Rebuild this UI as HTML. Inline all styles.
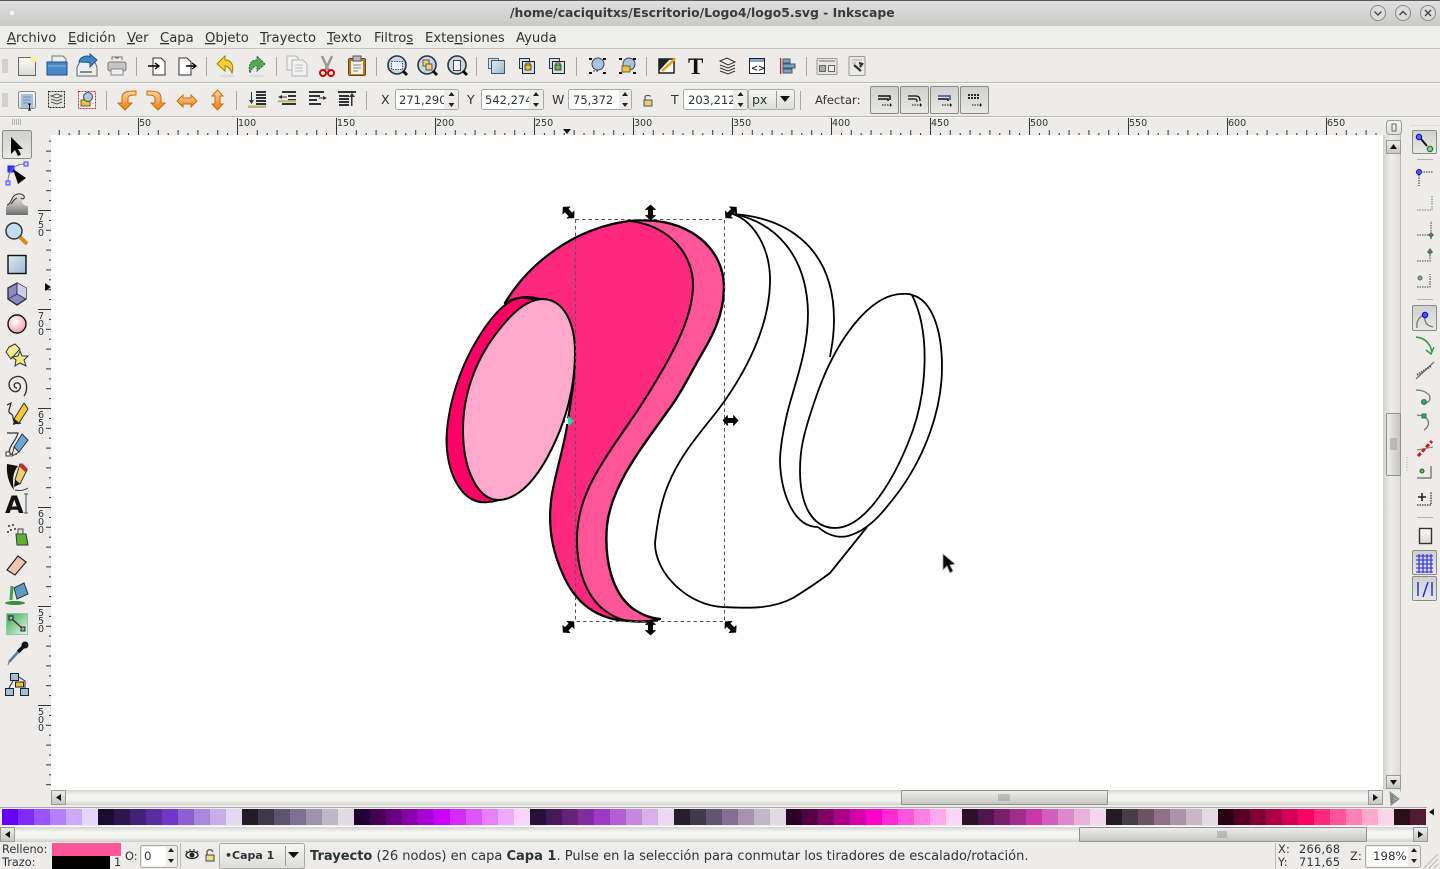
<!DOCTYPE html>
<html><head><meta charset="utf-8"><title>Inkscape</title>
<style>
html,body{margin:0;padding:0;background:#edeceb;width:1440px;height:869px;overflow:hidden}
svg{position:absolute;left:0;top:0}
text{font-family:"DejaVu Sans","Liberation Sans",sans-serif;fill:#2e3436}
#pal{position:absolute;left:2px;top:809px;height:16px;display:flex;width:1424px}
#pal i{display:block;width:16px;height:16px;flex:none}
</style></head><body>
<svg width="1440" height="869" viewBox="0 0 1440 869" xmlns="http://www.w3.org/2000/svg">
<defs>
<linearGradient id="tb" x1="0" y1="0" x2="0" y2="1"><stop offset="0" stop-color="#e0e0e0"/><stop offset="1" stop-color="#c9c9c9"/></linearGradient>
<linearGradient id="btn" x1="0" y1="0" x2="0" y2="1"><stop offset="0" stop-color="#f6f6f4"/><stop offset="1" stop-color="#dcdcd9"/></linearGradient>
<linearGradient id="tog" x1="0" y1="0" x2="0" y2="1"><stop offset="0" stop-color="#d0d0ce"/><stop offset="1" stop-color="#e8e8e6"/></linearGradient>
<linearGradient id="th" x1="0" y1="0" x2="0" y2="1"><stop offset="0" stop-color="#d4d4d2"/><stop offset=".3" stop-color="#f3f3f1"/><stop offset=".7" stop-color="#f3f3f1"/><stop offset="1" stop-color="#cfcfcd"/></linearGradient>
<linearGradient id="tv" x1="0" y1="0" x2="1" y2="0"><stop offset="0" stop-color="#d2d2d0"/><stop offset=".45" stop-color="#ececea"/><stop offset="1" stop-color="#dededc"/></linearGradient>
<linearGradient id="thumbh" x1="0" y1="0" x2="0" y2="1"><stop offset="0" stop-color="#eeeeec"/><stop offset="1" stop-color="#c4c4c1"/></linearGradient>
<linearGradient id="thumbv" x1="0" y1="0" x2="1" y2="0"><stop offset="0" stop-color="#eeeeec"/><stop offset="1" stop-color="#c4c4c1"/></linearGradient>
<linearGradient id="org" x1="0" y1="0" x2="0" y2="1"><stop offset="0" stop-color="#fcd9a8"/><stop offset="1" stop-color="#f07b10"/></linearGradient>
<linearGradient id="blu" x1="0" y1="0" x2="1" y2="1"><stop offset="0" stop-color="#dfe9f2"/><stop offset="1" stop-color="#9ab8d2"/></linearGradient>
<linearGradient id="pap" x1="0" y1="0" x2="0" y2="1"><stop offset="0" stop-color="#fbfbf9"/><stop offset="1" stop-color="#d8d8d4"/></linearGradient>
<linearGradient id="grn" x1="0" y1="0" x2="1" y2="1"><stop offset="0" stop-color="#2fa84f"/><stop offset="1" stop-color="#f0f8f0"/></linearGradient>
<linearGradient id="wav" x1="0" y1="0" x2="0" y2="1"><stop offset="0" stop-color="#eeeeee"/><stop offset=".5" stop-color="#b8b8b8"/><stop offset="1" stop-color="#707070"/></linearGradient>
<radialGradient id="pk" cx=".4" cy=".35" r=".7"><stop offset="0" stop-color="#fff"/><stop offset="1" stop-color="#ff9aa6"/></radialGradient>
<pattern id="rt" patternUnits="userSpaceOnUse" x="138" y="117" width="19.8" height="18"><rect x="0" y="13" width="1" height="5" fill="#333"/><rect x="9.9" y="16" width="1" height="2" fill="#333"/></pattern>
<pattern id="rl" patternUnits="userSpaceOnUse" x="33" y="210" width="18" height="19.8"><rect x="13" y="0" width="5" height="1" fill="#333"/><rect x="16" y="9.9" width="2" height="1" fill="#333"/></pattern>
<g id="grip"><path d="M2 0H8M2 2H8M2 4H8M2 6H8M2 8H8M2 10H8M2 12H8" stroke="#b4b4b0" stroke-width="1"/></g>
<g id="sp"><path d="M0 -4L3 -8L6 -4Z" fill="#222"/><path d="M0 3L3 7L6 3Z" fill="#222"/></g>
<path id="ha" d="M-7.500 0L-3 -5V-2.200H3V-5L7.500 0L3 5V2.200H-3V5Z" fill="#000" stroke="#000" stroke-width=".7" stroke-linejoin="round"/>
<g id="zm"><circle r="9" fill="#c8d8e8" stroke="#2e3436" stroke-width="1.600"/><path d="M6 6L10 10" stroke="#111" stroke-width="3"/></g>
</defs>

<!-- title bar -->
<rect width="1440" height="26" fill="url(#tb)"/>
<rect width="1440" height="1" fill="#5a5a5a"/>
<circle cx="12" cy="13" r="3" fill="#f4f4f4" stroke="#ccc"/>
<text x="510" y="17" font-size="12.400" font-weight="bold" style="fill:#3a3a3a">/home/caciquitxs/Escritorio/Logo4/logo5.svg - Inkscape</text>
<g fill="#dcdcdc" stroke="#8a8a8a"><circle cx="1378" cy="13" r="7.500"/><circle cx="1403" cy="13" r="7.500"/><circle cx="1428" cy="13" r="7.500"/></g>
<g fill="none" stroke="#444" stroke-width="1.400"><path d="M1374.500 11.500L1378 15L1381.500 11.500"/><path d="M1399.500 15L1403 11.500L1406.500 15"/><path d="M1425 10L1431 16M1431 10L1425 16"/></g>

<!-- menubar -->
<rect y="26" width="1440" height="22" fill="#edede9"/>
<rect y="48" width="1440" height="1" fill="#c2c2be"/>
<g font-size="13.200">
<text x="7" y="42"><tspan style="text-decoration:underline">A</tspan>rchivo</text>
<text x="68" y="42"><tspan style="text-decoration:underline">E</tspan>dición</text>
<text x="127" y="42"><tspan style="text-decoration:underline">V</tspan>er</text>
<text x="160" y="42"><tspan style="text-decoration:underline">C</tspan>apa</text>
<text x="205" y="42"><tspan style="text-decoration:underline">O</tspan>bjeto</text>
<text x="260" y="42"><tspan style="text-decoration:underline">T</tspan>rayecto</text>
<text x="327" y="42"><tspan style="text-decoration:underline">T</tspan>exto</text>
<text x="374" y="42">Filtro<tspan style="text-decoration:underline">s</tspan></text>
<text x="425" y="42">Exte<tspan style="text-decoration:underline">n</tspan>siones</text>
<text x="516" y="42">Ayuda</text>
</g>

<!-- toolbar lines -->
<rect y="82" width="1440" height="1" fill="#b8b8b4"/><rect y="83" width="1440" height="1" fill="#f8f8f6"/>
<rect y="116" width="1440" height="1" fill="#b8b8b4"/><rect y="117" width="1440" height="1" fill="#f8f8f6"/>
<use href="#grip" x="0" y="60"/><use href="#grip" x="0" y="94"/>
<path d="M12.500 119V125M14.500 119V125M16.500 119V125M18.500 119V125M20.500 119V125" stroke="#b4b4b0"/>
<g fill="#a9a9a6">
<rect x="136" y="57" width="1" height="19"/><rect x="206" y="57" width="1" height="19"/><rect x="276" y="57" width="1" height="19"/><rect x="376" y="57" width="1" height="19"/><rect x="476" y="57" width="1" height="19"/><rect x="576" y="57" width="1" height="19"/><rect x="646" y="57" width="1" height="19"/><rect x="806" y="57" width="1" height="19"/>
<rect x="106" y="91" width="1" height="19"/><rect x="236" y="91" width="1" height="19"/><rect x="366" y="91" width="1" height="19"/><rect x="800" y="91" width="1" height="19"/>
</g>

<!-- toolbar 1 icons -->
<rect x="18.500" y="57.500" width="17" height="18" fill="url(#pap)" stroke="#666"/><circle cx="34" cy="59" r="3" fill="#ffee99" stroke="#eeeeaa"/>
<path d="M52 62V56H63L66 59V64" fill="#eee" stroke="#777"/><path d="M47 62H67V75H47Z" fill="#4a86c8" stroke="#234f85"/><path d="M48 66H66" stroke="#8ab6e0"/>
<path d="M77 67L82 58H93L97 67V76H77Z" fill="#eee" stroke="#666"/><path d="M79 62C80 56 88 55 90 57V54L97 60L90 67V63C87 62 83 62 79 62Z" fill="#3f86c6" stroke="#1f5a92"/><path d="M80 72H92" stroke="#888" stroke-width="2"/>
<path d="M112 60V57H122V60" fill="#eee" stroke="#777"/><rect x="108" y="62" width="18" height="9" rx="2" fill="#c4c4c2" stroke="#777"/><rect x="111" y="69" width="12" height="6" fill="#eee" stroke="#888"/><path d="M115 58H119" stroke="#777"/>
<path d="M153 58H161L165 62V75H153Z" fill="#fff" stroke="#333"/><path d="M148 66H158M155 63L159 66L155 69" fill="none" stroke="#000" stroke-width="1.400"/>
<path d="M179 58H187L191 62V75H179Z" fill="#fff" stroke="#333"/><path d="M186 66H195M192 63L196 66L192 69" fill="none" stroke="#000" stroke-width="1.400"/>
<path d="M217 64L225 56V60C232 60 234 66 232 73C230 68 228 66 225 66V71Z" fill="#f4d030" stroke="#a08000"/><ellipse cx="227" cy="76" rx="8" ry="1.500" fill="#ddd"/>
<path d="M265 64L257 56V60C250 60 248 66 250 73C252 68 254 66 257 66V71Z" fill="#58a858" stroke="#2c6c2c" stroke-dasharray="2 1"/><ellipse cx="257" cy="76" rx="8" ry="1.500" fill="#ddd"/>
<g opacity=".55"><path d="M287 56H296L298 58V70H287Z" fill="#f6f6f4" stroke="#888"/><path d="M292 60H303L307 64V76H292Z" fill="#f6f6f4" stroke="#888"/><path d="M295 65H303M295 68H303M295 71H303" stroke="#999"/></g>
<path d="M322 56L327 67L332 56M327 67L330 72M327 67L324 72" fill="none" stroke="#999" stroke-width="2.500"/><circle cx="323" cy="73" r="3" fill="none" stroke="#cc0000" stroke-width="2"/><circle cx="331" cy="73" r="3" fill="none" stroke="#cc0000" stroke-width="2"/>
<rect x="348.500" y="58.500" width="17" height="17" rx="1.500" fill="#bc7c1e" stroke="#6d4408"/><rect x="351" y="61" width="12" height="13" fill="#f2f2f0"/><rect x="353" y="56" width="8" height="5" fill="#bbb" stroke="#555"/><path d="M353 65H361M353 68H361M353 71H358" stroke="#888"/>
<use href="#zm" x="397" y="65"/><rect x="391.500" y="61.500" width="11" height="8" fill="#eef" stroke="#555" stroke-dasharray="1.500 1"/>
<use href="#zm" x="427" y="65"/><rect x="423" y="60" width="6" height="6" fill="#f4d070" stroke="#555"/><rect x="426" y="64" width="6" height="6" fill="#f4d070" stroke="#555"/>
<use href="#zm" x="457" y="65"/><rect x="453.500" y="60.500" width="7" height="10" fill="#eef" stroke="#444"/>
<rect x="488.500" y="58.500" width="10" height="10" fill="#d4e0ec" stroke="#666"/><rect x="491.500" y="60.500" width="13" height="13" fill="url(#blu)" stroke="#456"/>
<rect x="519.500" y="58.500" width="10" height="10" fill="#d4e0ec" stroke="#333"/><rect x="522.500" y="61.500" width="12" height="12" fill="#d4e0ec" stroke="#222"/><rect x="525" y="65" width="6" height="5" fill="#e8c030" stroke="#543"/><path d="M526 65V63H530V65" fill="none" stroke="#543"/>
<rect x="549.500" y="58.500" width="10" height="10" fill="#d4e0ec" stroke="#333"/><rect x="552.500" y="61.500" width="12" height="12" fill="#d4e0ec" stroke="#222"/><rect x="555" y="65" width="6" height="5" fill="#70b040" stroke="#343"/><path d="M556 65V63H560V65" fill="none" stroke="#343"/>
<circle cx="598" cy="64" r="6" fill="#a8c4dc" stroke="#445"/><rect x="589" y="72" width="3" height="2" fill="#111"/><rect x="589" y="58" width="3" height="2" fill="#111"/><rect x="603" y="58" width="3" height="2" fill="#111"/><rect x="603" y="72" width="3" height="2" fill="#111"/><path d="M593 71H599" stroke="#445" stroke-dasharray="2 1"/>
<circle cx="629" cy="64" r="6" fill="#a8c4dc" stroke="#445"/><rect x="622" y="66" width="8" height="6" fill="#f0c030" stroke="#664"/><rect x="619" y="72" width="3" height="2" fill="#111"/><rect x="619" y="58" width="3" height="2" fill="#111"/><rect x="633" y="58" width="3" height="2" fill="#111"/><rect x="633" y="72" width="3" height="2" fill="#111"/>
<rect x="659" y="59" width="15" height="14" fill="#fff" stroke="#111" stroke-width="1.400"/><path d="M659 59H670L659 71Z" fill="#222"/><path d="M662 71L672 62L675 58" fill="none" stroke="#e8a010" stroke-width="2.500"/>
<text x="688" y="74" font-size="23" font-weight="bold" style="font-family:'Liberation Serif',serif;fill:#111">T</text>
<path d="M720 61L727 58L735 62L728 65Z" fill="#eee" stroke="#333"/><path d="M720 65L728 68L735 65M720 68L728 71L735 68M720 71L728 74L735 71" fill="none" stroke="#333"/>
<rect x="749.500" y="58.500" width="15" height="15" fill="#fff" stroke="#222"/><rect x="750" y="59" width="14" height="3" fill="#7ea8cc"/><text x="751" y="71" font-size="8.500" font-weight="bold" style="fill:#222">&lt;&gt;</text>
<rect x="780" y="58" width="1.300" height="16" fill="#c02020"/><rect x="783" y="59" width="7" height="4" fill="#7aa2c8" stroke="#456"/><rect x="783" y="64" width="12" height="4" fill="#7aa2c8" stroke="#456"/><rect x="783" y="69" width="9" height="4" fill="#7aa2c8" stroke="#456"/>
<rect x="817" y="58.500" width="20" height="16" rx="1" fill="#e6e6e4" stroke="#999"/><path d="M819 61H835" stroke="#aaa" stroke-width="2"/><rect x="819.500" y="65.500" width="6" height="6" fill="#aaa" stroke="#666"/><rect x="828.500" y="65.500" width="6" height="6" fill="#eee" stroke="#666"/>
<rect x="849" y="56.500" width="16" height="19" rx="1" fill="#eaeae8" stroke="#999"/><path d="M852 60H862M852 63H856" stroke="#aaa"/><path d="M854 65L861 71M859 63L862 64L860 67" stroke="#333" stroke-width="2.400" fill="none"/>

<!-- toolbar 2 -->
<rect x="18.500" y="91.500" width="17" height="17" rx="2" fill="url(#btn)" stroke="#8a8a86"/><rect x="21" y="94" width="12" height="14" fill="#a8c0dc"/><path d="M23 97H31M23 100H31M23 103H28" stroke="#7490b4"/><path d="M28 104H31M29.500 104V110M28 110H31" stroke="#000"/>
<rect x="48.500" y="91.500" width="16" height="16" fill="#e4e4e2" stroke="#222" stroke-dasharray="2 1"/><path d="M51 96L57 94L62 96L57 98Z" fill="#eee" stroke="#555"/><path d="M51 99L57 101L62 99M51 102L57 104L62 102" fill="none" stroke="#555"/>
<rect x="78.500" y="91.500" width="17" height="17" fill="#f0f0ee" stroke="#cc3333" stroke-dasharray="2 1"/><rect x="81" y="100" width="9" height="6" fill="#eec040" stroke="#664"/><circle cx="88" cy="97" r="4.500" fill="#b0c8dc" stroke="#445"/>
<path d="M118 103L125 110L132 103H128V98C128 96 130 95 136 95V91C126 91 122 92 122 98V103Z" fill="url(#org)" stroke="#d46a00"/>
<path d="M165 103L158 110L151 103H155V98C155 96 153 95 147 95V91C157 91 161 92 161 98V103Z" fill="url(#org)" stroke="#d46a00"/>
<path d="M177 101L183 95V98H191V95L197 101L191 107V104H183V107Z" fill="url(#org)" stroke="#d46a00"/>
<path d="M217.500 90L223 96H220V104H223L217.500 110L212 104H215V96H212Z" fill="url(#org)" stroke="#d46a00"/>
<g fill="#2e3436"><rect x="256" y="91" width="10" height="2"/><rect x="256" y="94" width="10" height="2"/><rect x="256" y="97" width="10" height="2"/><rect x="256" y="100" width="10" height="2"/><rect x="256" y="103" width="10" height="2"/><path d="M251 92H252V100H254L251.500 104L249 100H251Z"/>
<rect x="282" y="91" width="14" height="2"/><rect x="282" y="103" width="14" height="2"/><rect x="288" y="95" width="8" height="2"/><rect x="288" y="99" width="8" height="2"/><path d="M278 97L282 95V96.500H287V97.500H282V99Z"/>
<rect x="309" y="91" width="15" height="2"/><rect x="309" y="95" width="11" height="2"/><rect x="309" y="99" width="8" height="2"/><rect x="309" y="103" width="12" height="2"/><path d="M327 98L323 96V97.500H319V98.500H323V100Z"/>
<rect x="338" y="91" width="18" height="2"/><rect x="339" y="95" width="10" height="2"/><rect x="339" y="98" width="10" height="2"/><rect x="339" y="101" width="10" height="2"/><rect x="339" y="104" width="10" height="2"/><path d="M351 106H352.500V97H355L352 93L349 97H351Z"/></g>
<rect x="248" y="105.500" width="18" height="2.500" fill="#c8b078"/><rect x="278" y="100" width="18" height="2.500" fill="#c8b078" opacity=".9"/>
<g font-size="12.500">
<text x="381" y="104">X</text><text x="467" y="104">Y</text><text x="552" y="104">W</text><text x="671" y="104">T</text><text x="815" y="104" font-size="11.700">Afectar:</text>
</g>
<g fill="#fff" stroke="#a9a9a5"><rect x="395.500" y="89.500" width="63" height="20" rx="2"/><rect x="481.500" y="89.500" width="62" height="20" rx="2"/><rect x="568.500" y="89.500" width="63" height="20" rx="2"/><rect x="683.500" y="89.500" width="64" height="20" rx="2"/></g>
<g font-size="11.500"><text x="399" y="104">271,290</text><text x="485" y="104">542,274</text><text x="573" y="104">75,372</text><text x="688" y="104">203,212</text></g>
<g fill="#edeceb"><rect x="444" y="90" width="14" height="19"/><rect x="529" y="90" width="14" height="19"/><rect x="619" y="90" width="12" height="19"/><rect x="733" y="90" width="14" height="19"/></g>
<use href="#sp" x="448.500" y="100"/><use href="#sp" x="533" y="100"/><use href="#sp" x="622" y="100"/><use href="#sp" x="737.500" y="100"/>
<rect x="644" y="100" width="8" height="6" fill="#e8d070" stroke="#555"/><path d="M645 100V97C645 95 650 95 650.500 96.500" fill="none" stroke="#555" stroke-width="1.200"/>
<rect x="748.500" y="89.500" width="46" height="20" rx="2" fill="url(#btn)" stroke="#a9a9a5"/><rect x="776" y="91" width="1" height="17" fill="#999"/><path d="M780 96H790L785 102Z" fill="#111"/>
<text x="752" y="104" font-size="12.500">px</text>
<g stroke="#8a8a86"><rect x="870.500" y="86.500" width="28" height="27" rx="1.500" fill="url(#tog)"/><rect x="900.500" y="86.500" width="28" height="27" rx="1.500" fill="url(#tog)"/><rect x="930.500" y="86.500" width="28" height="27" rx="1.500" fill="url(#tog)"/><rect x="960.500" y="86.500" width="28" height="27" rx="1.500" fill="url(#tog)"/></g>
<g fill="none" stroke="#111"><path d="M878 96H890V100M878 99H888V101" stroke-width="1.500"/><path d="M882 105H890" stroke-dasharray="1.500 1"/><path d="M908 96H916C919 96 920 98 920 101M908 99H915C917 99 917 100 917 102" stroke-width="1.200"/><path d="M912 105H920" stroke-dasharray="1.500 1"/><path d="M938 96H950V100" stroke="#46a" stroke-width="1.700"/><path d="M938 99H948V101" stroke-width="1.500"/><path d="M942 105H950" stroke-dasharray="1.500 1"/><path d="M968 95H980M968 98H980" stroke-dasharray="2 1" stroke-width="1.700"/><path d="M972 105H980" stroke-dasharray="1.500 1"/></g>
<g fill="#111"><path d="M890 103L892 105L890 107Z"/><path d="M920 103L922 105L920 107Z"/><path d="M950 103L952 105L950 107Z"/><path d="M980 103L982 105L980 107Z"/></g>

<!-- rulers -->
<rect x="51" y="118" width="1332" height="17" fill="url(#rt)"/>
<rect x="33" y="135" width="18" height="655" fill="url(#rl)"/>
<g fill="#333"><rect x="138" y="118" width="1" height="17"/><rect x="237" y="118" width="1" height="17"/><rect x="336" y="118" width="1" height="17"/><rect x="435" y="118" width="1" height="17"/><rect x="534" y="118" width="1" height="17"/><rect x="633" y="118" width="1" height="17"/><rect x="732" y="118" width="1" height="17"/><rect x="831" y="118" width="1" height="17"/><rect x="930" y="118" width="1" height="17"/><rect x="1029" y="118" width="1" height="17"/><rect x="1128" y="118" width="1" height="17"/><rect x="1227" y="118" width="1" height="17"/><rect x="1326" y="118" width="1" height="17"/>
<rect x="38" y="210" width="13" height="1"/><rect x="38" y="309" width="13" height="1"/><rect x="38" y="408" width="13" height="1"/><rect x="38" y="507" width="13" height="1"/><rect x="38" y="606" width="13" height="1"/><rect x="38" y="705" width="13" height="1"/></g>
<g font-size="9.500"><text x="139" y="126">50</text><text x="238" y="126">100</text><text x="337" y="126">150</text><text x="436" y="126">200</text><text x="535" y="126">250</text><text x="634" y="126">300</text><text x="733" y="126">350</text><text x="832" y="126">400</text><text x="931" y="126">450</text><text x="1030" y="126">500</text><text x="1129" y="126">550</text><text x="1228" y="126">600</text><text x="1327" y="126">650</text></g>
<g font-size="9.500" text-anchor="middle"><text x="41" y="220">7</text><text x="41" y="228">5</text><text x="41" y="236">0</text>
<text x="41" y="319">7</text><text x="41" y="327">0</text><text x="41" y="335">0</text>
<text x="41" y="418">6</text><text x="41" y="426">5</text><text x="41" y="434">0</text>
<text x="41" y="517">6</text><text x="41" y="525">0</text><text x="41" y="533">0</text>
<text x="41" y="616">5</text><text x="41" y="624">5</text><text x="41" y="632">0</text>
<text x="41" y="715">5</text><text x="41" y="723">0</text><text x="41" y="731">0</text></g>
<path d="M563 129H571L567 134Z" fill="#111"/><path d="M45 283L51 287L45 291Z" fill="#111"/>

<!-- canvas -->
<rect x="51" y="135" width="1332" height="655" fill="#fff"/>

<!-- drawing -->
<g stroke="#000" stroke-linejoin="round">
<path d="M630 221C690 215 724 250 724 287C724 315 712 337 700 357C688 378 680 395 667 412C640 450 612 485 607 525C604 560 612 592 632 608C642 615 650 618 660 619C650 622 640 622 630 621C600 620 576 606 562 572C550 545 548 520 552 495C556 470 565 445 568 420C572 395 576 370 575 350C574 320 562 298 540 299C530 296 517 296 505 303C530 262 575 228 630 221Z" fill="#ff5599" stroke-width="2.400"/>
<path d="M630 221C670 226 694 255 693 287C692 320 672 357 638 410C600 465 577 495 577 540C577 568 585 595 604 610C612 616 620 620 630 621C600 620 576 606 562 572C550 545 548 520 552 495C556 470 565 445 568 420C572 395 576 370 575 350C574 320 562 298 540 299C530 296 517 296 505 303C530 262 575 228 630 221Z" fill="#ff2a7f" stroke-width="2"/>
<path d="M526 298C505 294 480 330 464 365C450 398 445 430 447 450C450 480 465 505 488 502C495 502 500 500 504 497L470 420L515 320L541 300Z" fill="#ff0066" stroke-width="2"/>
<path d="M542 299C565 299 575 325 575 352C575 390 565 425 547 458C532 485 515 500 498 500C478 500 463 470 463 430C463 395 475 362 495 335C510 315 525 300 542 299Z" fill="#ffaacc" stroke-width="2"/>
</g>
<g fill="none" stroke="#000" stroke-width="1.800" stroke-linejoin="round">
<path d="M733 214C755 222 771 250 770 283C769 325 748 370 718 410C700 433 680 455 668 485C660 505 657 525 655 543C655 575 690 606 723 607C745 608 770 610 793 598C806 590 818 582 830 573L867 527"/>
<path d="M733 214C775 222 807 255 808 313C808 350 796 380 788 410C782 435 780 450 780 462C781 490 792 527 818 527"/>
<path d="M733 214C790 218 834 250 834 320C834 335 832 345 830 357"/>
<path d="M902 294C870 294 835 340 815 400C803 435 800 450 800 470C800 505 812 528 835 528C865 528 895 480 913 430C925 395 932 335 912 295C908 293 904 294 902 294Z"/>
<path d="M912 295C932 300 942 330 942 367C942 410 925 455 900 490C885 510 870 530 848 536C835 539 825 533 818 527"/>
</g>
<rect x="575.500" y="219.500" width="149" height="402" fill="none" stroke="#555" stroke-dasharray="3.500 3"/>
<use href="#ha" transform="translate(568.500 212.500) rotate(45)"/>
<use href="#ha" transform="translate(650.500 212.500) rotate(90)"/>
<use href="#ha" transform="translate(731 212.500) rotate(-45)"/>
<use href="#ha" transform="translate(568.500 627) rotate(-45)"/>
<use href="#ha" transform="translate(650.500 627.500) rotate(90)"/>
<use href="#ha" transform="translate(730.500 627) rotate(45)"/>
<use href="#ha" transform="translate(730.500 420.500)"/>
<path d="M563 421L566 418V424Z" fill="#333"/><rect x="565" y="418" width="4" height="6" fill="#fff"/><path d="M568 416L574 421L568 426Z" fill="#17dfa0"/>
<path d="M943 554V570L947 566L950 573L953 571L950 565L955 564Z" fill="#000" stroke="#aaa" stroke-width=".8"/>

<!-- left toolbox -->
<rect x="2.500" y="130.500" width="29" height="28" rx="2" fill="url(#tog)" stroke="#8a8a86"/>
<path d="M11 137V154L15 150L18 156L21 154.500L18 149H23Z" fill="#000"/>
<rect x="8" y="166" width="6" height="6" fill="#3333ff" stroke="#22f"/><rect x="24" y="162" width="4" height="4" fill="#ccf" stroke="#44f"/><rect x="6" y="181" width="4" height="4" fill="#ccf" stroke="#44f"/><path d="M8 181C8 172 14 164 24 164" fill="none" stroke="#777"/><path d="M13 169L26 178L18 184Z" fill="#000"/>
<path d="M6 215V206C9 206 11 204 12 200C14 194 20 192 24 195C26 198 24 201 22 199C21 203 24 206 28 206V215Z" fill="url(#wav)"/><path d="M7 205C10 205 11 200 13 197C16 193 22 193 24 196C25 198 23 200 21 198M11 204C13 202 14 199 17 198" fill="none" stroke="#333"/>
<circle cx="14" cy="231" r="8" fill="#c4dcf0" stroke="#2e3436" stroke-width="1.500"/><path d="M20 237L27 244" stroke="#d98a18" stroke-width="4"/>
<rect x="8" y="255.500" width="18" height="18" fill="url(#blu)" stroke="#111" stroke-width="1.400"/>
<path d="M17 283L26 288V299L17 305L8 299V288Z" fill="#8a8ac4" stroke="#333" stroke-width="1.400"/><path d="M17 283L26 288V299L17 294Z" fill="#d0d0ec"/><path d="M17 283V294L8 299M17 294L26 299" fill="none" stroke="#334"/>
<circle cx="17" cy="324" r="9" fill="url(#pk)" stroke="#111" stroke-width="1.400"/>
<path d="M9 347L15 344L20 349L11 359L6 352Z" fill="#f4ee90" stroke="#333"/><path d="M20 351L22 356L28 356L24 360L26 366L20 363L15 366L16 360L12 357L18 356Z" fill="#f0ec80" stroke="#333"/>
<path d="M17 388C14 388 13 384 16 383C20 382 22 387 19 390C15 394 9 390 9 384C10 377 19 374 24 379C28 384 27 392 24 396" fill="none" stroke="#333" stroke-width="1.400"/>
<path d="M7 405L11 403L9 410C8 414 13 413 13 417C13 422 17 425 21 423" fill="none" stroke="#222" stroke-width="1.200"/><path d="M24 403L28 409L19 423L14 419Z" fill="#f4cc30" stroke="#333"/><path d="M14 419L19 423L13 425Z" fill="#222"/>
<path d="M7 433H18C16 441 10 444 9 452M8 454H17" fill="none" stroke="#333" stroke-width="1.200"/><rect x="6" y="452" width="4" height="4" fill="#fff" stroke="#333"/><path d="M22 434L28 440L19 452L14 447Z" fill="#6aa8d8" stroke="#333"/><path d="M14 447L19 452L12 456Z" fill="#eee" stroke="#333"/>
<path d="M7 464C6 474 9 484 14 490C12 480 13 472 18 466Z" fill="#111"/><path d="M20 464L27 470L20 484L15 480Z" fill="#f0d070" stroke="#333"/><path d="M22 463L28 469L25 472L19 466Z" fill="#c83030"/><path d="M15 480L20 484L14 487Z" fill="#111"/><path d="M15 490C20 491 25 490 28 488" stroke="#333" fill="none"/>
<text x="5" y="513" font-size="24" font-weight="bold" style="fill:#111">A</text><path d="M24 494H28M26 494V513M24 513H28" stroke="#555"/>
<g fill="#333"><circle cx="9" cy="526" r="1"/><circle cx="13" cy="525" r="1"/><circle cx="11" cy="530" r="1"/><circle cx="15" cy="529" r="1"/><circle cx="8" cy="532" r="1"/></g><path d="M16 534H26L28 545H17Z" fill="#60b030" stroke="#335"/><rect x="18" y="529" width="5" height="5" fill="#ddd" stroke="#444"/>
<path d="M7 570L18 556L26 562L15 575Z" fill="#f4c4b0" stroke="#222" stroke-width="1.200"/>
<path d="M14 588L24 583L28 594L17 599Z" fill="#5a9ec8" stroke="#333"/><path d="M12 586L11 600" stroke="#4a9c48" stroke-width="3"/><ellipse cx="15" cy="603" rx="10" ry="2" fill="#3c8c40"/>
<rect x="6.500" y="613.500" width="21" height="21" fill="url(#grn)" stroke="#8ccc9c"/><path d="M11 618L23 629" stroke="#333" stroke-width="1.400"/><rect x="9" y="616" width="4" height="4" fill="#aaa" stroke="#222"/><rect x="21" y="627" width="4" height="4" fill="#aaa" stroke="#222"/>
<path d="M24 646L18 652" stroke="#111" stroke-width="3.500"/><path d="M18 652L9 662" stroke="#5a7a9a" stroke-width="2.600"/><path d="M9 662L8 665" stroke="#5a7a9a"/><circle cx="25" cy="645" r="3.500" fill="#111"/>
<rect x="10.500" y="673.500" width="8" height="7" fill="#9cc0e0" stroke="#222"/><rect x="15.500" y="682" width="8" height="5" fill="#f4c030" stroke="#222"/><rect x="5.500" y="688.500" width="8" height="7" fill="#9cc0e0" stroke="#222"/><rect x="20.500" y="688.500" width="8" height="7" fill="#9cc0e0" stroke="#222"/><path d="M13 681L9 688M19 677L25 681V688" fill="none" stroke="#222"/>

<!-- vertical scrollbar -->
<rect x="1383" y="135" width="17" height="655" fill="url(#tv)"/>
<rect x="1400" y="120" width="1" height="672" fill="#bbb"/>
<rect x="1386.500" y="120.500" width="15" height="14" rx="3" fill="url(#btn)" stroke="#999"/><path d="M1392 124H1396V131H1392Z" fill="none" stroke="#666"/>
<rect x="1386.500" y="140.500" width="14" height="13" fill="url(#thumbh)" stroke="#999"/><path d="M1390 149L1393.500 144L1397 149Z" fill="#111"/>
<rect x="1386.500" y="413.500" width="14" height="62" rx="1" fill="url(#thumbv)" stroke="#909090"/><path d="M1390 439H1397M1390 441H1397M1390 443H1397M1390 445H1397M1390 447H1397M1390 449H1397" stroke="#999"/>
<rect x="1386.500" y="775.500" width="14" height="13" fill="url(#thumbh)" stroke="#999"/><path d="M1390 780L1393.500 785L1397 780Z" fill="#111"/>
<path d="M1407 457V472" stroke="#aaa" stroke-dasharray="1 1.500"/>
<!-- corner colour icon -->
<path d="M1390 792L1399 799L1391 805Z" fill="#b0b0b0" stroke="#888"/><path d="M1391 795L1397 799M1391 798L1396 801M1391 801L1394 803" stroke="#5a8a5a"/><path d="M1392 794V803" stroke="#7a5aa0"/>

<!-- right toolbar -->
<rect x="1410" y="125" width="30" height="1" fill="#ddd"/>
<rect x="1412.500" y="130.500" width="24" height="23" rx="1.500" fill="url(#tog)" stroke="#8a8a86"/>
<circle cx="1419" cy="137" r="2.700" fill="#6666ff" stroke="#00c"/><circle cx="1430" cy="149" r="2.700" fill="#8c8" stroke="#262"/><path d="M1421 139L1427 146" stroke="#111" stroke-width="2"/>
<rect x="1417" y="159" width="16" height="1" fill="#b0b0ac"/>
<circle cx="1419" cy="172" r="2.500" fill="#5555ff" stroke="#00c"/><path d="M1421 172H1433M1419 175V186" stroke="#555" stroke-width="1.300" stroke-dasharray="1.500 1"/>
<path d="M1417 210H1432V195" fill="none" stroke="#8a9a8a" stroke-width="1.300" stroke-dasharray="1.500 1"/>
<path d="M1417 235H1431V221M1431 235V240" fill="none" stroke="#666" stroke-width="1.300" stroke-dasharray="1.500 1"/><path d="M1431 232L1434 235L1431 238L1428 235Z" fill="#575"/>
<path d="M1417 261H1430V253" fill="none" stroke="#666" stroke-width="1.300" stroke-dasharray="1.500 1"/><path d="M1430 248L1433 252L1430 255L1427 252Z" fill="#575"/>
<path d="M1417 287H1430V274" fill="none" stroke="#666" stroke-width="1.300" stroke-dasharray="1.500 1"/><circle cx="1420" cy="278" r="2" fill="#8a8" stroke="#575"/>
<rect x="1417" y="299" width="16" height="1" fill="#b0b0ac"/>
<rect x="1412.500" y="305.500" width="24" height="25" rx="1.500" fill="url(#tog)" stroke="#8a8a86"/>
<path d="M1417 328C1416 320 1420 316 1425 315M1425 315C1424 322 1427 326 1433 327" fill="none" stroke="#777" stroke-width="1.300"/><circle cx="1425" cy="315" r="2.700" fill="#5555ee" stroke="#00c"/>
<path d="M1416 337C1424 338 1430 342 1432 352" fill="none" stroke="#2c9c3c" stroke-width="1.500"/><path d="M1426 350L1431 354L1434 347" fill="none" stroke="#2c9c3c" stroke-width="1.500"/>
<path d="M1416 379L1434 362" stroke="#777" stroke-width="1.300"/><path d="M1417 375L1431 366" stroke="#555" stroke-dasharray="1.500 1" stroke-width="2"/>
<path d="M1416 390C1424 390 1430 394 1430 398C1430 402 1426 403 1424 403" fill="none" stroke="#777" stroke-width="1.300"/><circle cx="1424" cy="402" r="2.500" fill="#48a" stroke="#282"/>
<path d="M1417 415L1424 416C1430 420 1430 426 1424 430" fill="none" stroke="#777" stroke-width="1.300"/><rect x="1422" y="414" width="4" height="4" fill="#48a" stroke="#282"/>
<path d="M1418 456L1432 441" stroke="#d01818" stroke-width="3" stroke-dasharray="4 2"/><path d="M1417 450L1433 447" stroke="#777"/>
<path d="M1417 478H1431V466" fill="none" stroke="#666" stroke-width="1.200"/><circle cx="1422" cy="471" r="2" fill="#6b6" stroke="#262"/>
<path d="M1418 497H1426M1422 493V501" stroke="#222" stroke-width="1.600"/><path d="M1417 505H1431V492" fill="none" stroke="#333" stroke-width="1.300" stroke-dasharray="1.500 1"/>
<rect x="1417" y="517" width="16" height="1" fill="#b0b0ac"/>
<rect x="1419.500" y="528.500" width="12" height="15" fill="url(#pap)" stroke="#333" stroke-width="1.400"/>
<rect x="1412.500" y="550.500" width="24" height="24" rx="1.500" fill="url(#tog)" stroke="#8a8a86"/>
<path d="M1416 556H1433M1416 560H1433M1416 564H1433M1416 568H1433M1416 572H1433M1419 554V573M1423 554V573M1427 554V573M1431 554V573" stroke="#2222ee" stroke-width="1.100"/>
<rect x="1412.500" y="576.500" width="24" height="24" rx="1.500" fill="url(#tog)" stroke="#8a8a86"/>
<path d="M1418 582V596M1432 582V596M1423 597L1428 582" stroke="#2222ee" stroke-width="1.400"/>

<!-- horizontal scrollbar -->
<rect x="51" y="790" width="1332" height="15" fill="url(#th)"/>
<rect x="51.500" y="790.500" width="14" height="14" fill="url(#thumbh)" stroke="#999"/><path d="M61 794L56 797.500L61 801Z" fill="#111"/>
<rect x="1368.500" y="790.500" width="14" height="14" fill="url(#thumbh)" stroke="#999"/><path d="M1373 794L1378 797.500L1373 801Z" fill="#111"/>
<rect x="901.500" y="790.500" width="206" height="14" rx="1" fill="url(#thumbh)" stroke="#909090"/><path d="M999 794V801M1001 794V801M1003 794V801M1005 794V801M1007 794V801M1009 794V801" stroke="#999"/>

<!-- palette frame -->
<rect x="0" y="807" width="1427" height="1" fill="#aaa"/>
<rect x="0" y="826" width="1427" height="1" fill="#fff"/>
<path d="M1429 812L1434 808.500V815.500Z" fill="#111"/>

<!-- palette scrollbar -->
<rect x="0" y="827" width="1428" height="15" fill="url(#th)"/>
<rect x="0.500" y="827.500" width="14" height="14" fill="url(#thumbh)" stroke="#999"/><path d="M10 831L5 834.500L10 838Z" fill="#111"/>
<rect x="1413.500" y="827.500" width="14" height="14" fill="url(#thumbh)" stroke="#999"/><path d="M1418 831L1423 834.500L1418 838Z" fill="#111"/>
<rect x="1079.500" y="827.500" width="287" height="14" rx="1" fill="url(#thumbh)" stroke="#909090"/><path d="M1218 831V838M1220 831V838M1222 831V838M1224 831V838M1226 831V838" stroke="#999"/>

<!-- status bar -->
<text x="2" y="853" font-size="11.300">Relleno:</text>
<text x="2" y="866" font-size="11.300">Trazo:</text>
<rect x="52" y="843" width="69" height="13" fill="#ff5599"/>
<rect x="52" y="856" width="58" height="13" fill="#000"/>
<text x="114" y="866" font-size="11.300">1</text>
<text x="125" y="860" font-size="11.300">O:</text>
<rect x="140.500" y="845.500" width="37" height="22" rx="2" fill="#edeceb" stroke="#a9a9a5"/><rect x="142" y="847" width="24" height="19" fill="#fff"/>
<text x="144" y="860" font-size="11.800">0</text><use href="#sp" x="168" y="856"/>
<rect x="180" y="843" width="1" height="26" fill="#bbb"/>
<ellipse cx="192" cy="855" rx="6" ry="3.500" fill="#eee" stroke="#222" stroke-width="1.300"/><circle cx="192" cy="855" r="2.500" fill="#222"/><path d="M186 851L188 853M190 849V852M194 849V852M198 851L196 853" stroke="#222"/>
<rect x="206" y="855" width="8" height="6" fill="#eedd88" stroke="#444"/><path d="M207 855V852C207 849 212 849 213 852" fill="none" stroke="#444" stroke-width="1.200"/>
<rect x="219.500" y="843.500" width="85" height="25" rx="2" fill="url(#btn)" stroke="#a9a9a5"/><rect x="285" y="846" width="1" height="20" fill="#999"/><path d="M288 852H299L293.500 858Z" fill="#111"/>
<text x="225" y="859" font-size="11" font-weight="bold">•Capa 1</text>
<text x="310" y="860" font-size="13"><tspan font-weight="bold">Trayecto</tspan> (26 nodos) en capa <tspan font-weight="bold">Capa 1</tspan>. Pulse en la selección para conmutar los tiradores de escalado/rotación.</text>
<rect x="1275" y="843" width="1" height="26" fill="#bbb"/>
<g font-size="11.300" letter-spacing=".3"><text x="1278" y="853">X:</text><text x="1278" y="866">Y:</text><text x="1299" y="853">266,68</text><text x="1299" y="866">711,65</text><text x="1350" y="860">Z:</text></g>
<rect x="1365.500" y="845.500" width="55" height="22" rx="2" fill="#edeceb" stroke="#a9a9a5"/><rect x="1367" y="847" width="41" height="19" fill="#fff"/>
<text x="1373" y="860" font-size="11.800">198%</text><use href="#sp" x="1411" y="856"/>
<path d="M1424 868L1438 854M1429 868L1438 859M1434 868L1438 864" stroke="#bbb"/>
</svg>
<div id="pal"><i style="background:#6600ff"></i><i style="background:#7f2aff"></i><i style="background:#9955ff"></i><i style="background:#b380ff"></i><i style="background:#ccaaff"></i><i style="background:#e5d5ff"></i><i style="background:#1a0c2e"></i><i style="background:#2d1650"></i><i style="background:#442178"></i><i style="background:#5a2ca0"></i><i style="background:#7137c8"></i><i style="background:#8d5fd3"></i><i style="background:#aa87de"></i><i style="background:#c6afe9"></i><i style="background:#e3d7f4"></i><i style="background:#211c26"></i><i style="background:#3e3848"></i><i style="background:#5d5570"></i><i style="background:#7e6f94"></i><i style="background:#9d94ac"></i><i style="background:#beb7c8"></i><i style="background:#dedbe3"></i><i style="background:#220033"></i><i style="background:#440055"></i><i style="background:#660080"></i><i style="background:#8800aa"></i><i style="background:#aa00d4"></i><i style="background:#cc00ff"></i><i style="background:#d42aff"></i><i style="background:#dd55ff"></i><i style="background:#e580ff"></i><i style="background:#eeaaff"></i><i style="background:#f6d5ff"></i><i style="background:#241133"></i><i style="background:#451a5a"></i><i style="background:#672178"></i><i style="background:#802ca0"></i><i style="background:#a037c8"></i><i style="background:#b35fd3"></i><i style="background:#c687de"></i><i style="background:#d9afe9"></i><i style="background:#ecd7f4"></i><i style="background:#241f2b"></i><i style="background:#413a48"></i><i style="background:#635570"></i><i style="background:#856f94"></i><i style="background:#a794ac"></i><i style="background:#c2b7c8"></i><i style="background:#e0dbe3"></i><i style="background:#2b0028"></i><i style="background:#550044"></i><i style="background:#800066"></i><i style="background:#aa0088"></i><i style="background:#d400aa"></i><i style="background:#ff00cc"></i><i style="background:#ff2ad4"></i><i style="background:#ff55dd"></i><i style="background:#ff80e5"></i><i style="background:#ffaaee"></i><i style="background:#ffd5f6"></i><i style="background:#2b1129"></i><i style="background:#501650"></i><i style="background:#782168"></i><i style="background:#a02c8c"></i><i style="background:#c837ab"></i><i style="background:#d35fbc"></i><i style="background:#de87cd"></i><i style="background:#e9afdd"></i><i style="background:#f4d7ee"></i><i style="background:#241c21"></i><i style="background:#483c46"></i><i style="background:#6c5364"></i><i style="background:#916f8a"></i><i style="background:#ac94a8"></i><i style="background:#c8b7c6"></i><i style="background:#e3dbe3"></i><i style="background:#2b0011"></i><i style="background:#550022"></i><i style="background:#800033"></i><i style="background:#aa0044"></i><i style="background:#d40055"></i><i style="background:#ff0066"></i><i style="background:#ff2a7f"></i><i style="background:#ff5599"></i><i style="background:#ff80b2"></i><i style="background:#ffaacc"></i><i style="background:#ffd5e5"></i><i style="background:#2b0f18"></i><i style="background:#501a30"></i></div>
</body></html>
